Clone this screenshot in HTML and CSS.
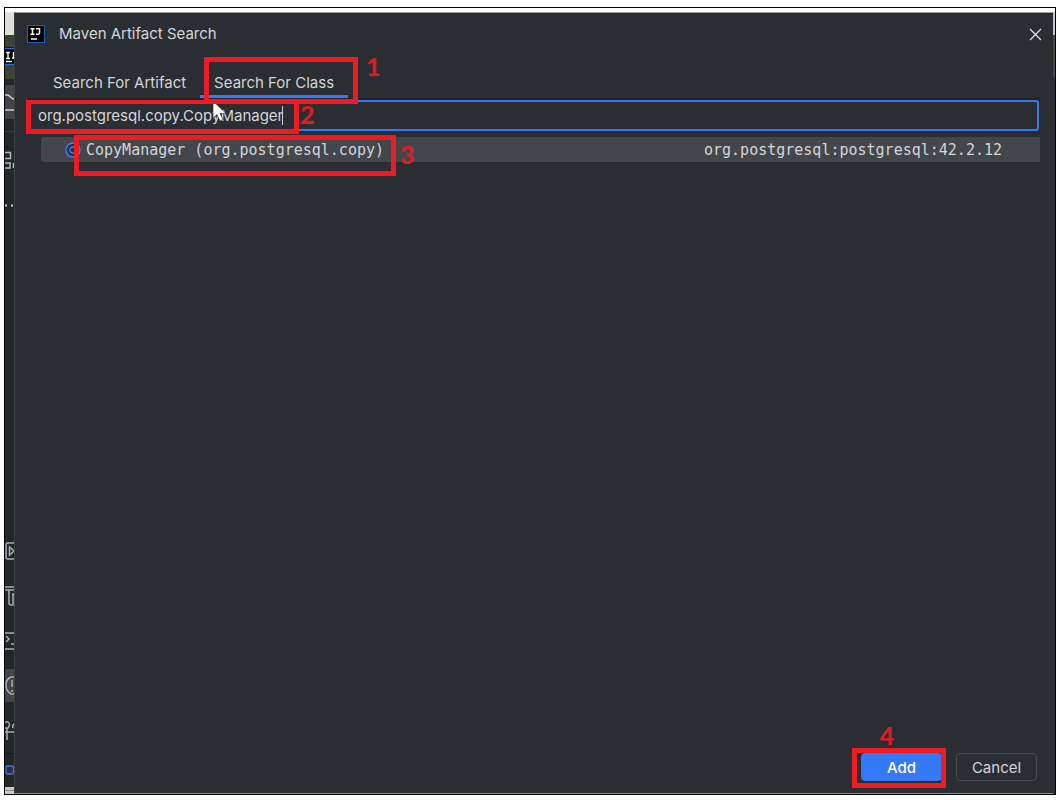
FILE: index.html
```html
<!DOCTYPE html>
<html lang="en">
<head>
<meta charset="utf-8">
<title>Maven Artifact Search</title>
<link rel="stylesheet" href="styles.css">
</head>
<body>
<div class="frame">
  <aside class="strip">
    <svg class="strip-top" width="9" height="204" viewBox="0 0 9 204" aria-hidden="true">
      <rect width="9" height="23" fill="#dfe0dc"/>
      <rect y="23" width="9" height="48" fill="#3a4435"/>
      <rect y="35" width="9" height="18" fill="#000"/>
      <path d="M0 36.500H9M0 52.500H9" stroke="#1f6fe0" stroke-width="1.500"/>
      <path d="M1 40.500H5M3 40.500V46.500M1 46.500H5M1 49.500H7M8.500 40V46H7" stroke="#fff" stroke-width="1.400" fill="none"/>
      <rect y="67" width="9" height="6" fill="#24272a"/>
      <rect y="73" width="9" height="34" fill="#43454a"/>
      <path d="M0 83H3L8 87H9M0 98H9" stroke="#ced0d6" stroke-width="1.500" fill="none"/>
      <path d="M0 119.500H9" stroke="#3b3e42"/>
      <path d="M0 140.500H5.500V146.500H0M0 151H5V156H0M8.500 156V151" stroke="#b4b8bf" stroke-width="1.500" fill="none"/>
      <path d="M0 193.500H2M6 193.500H8" stroke="#ced0d6" stroke-width="2"/>
    </svg>
    <svg class="strip-bottom" width="9" height="254" viewBox="0 540 9 254" aria-hidden="true">
      <rect y="669" width="9" height="33" fill="#43454a"/>
      <g stroke="#a9adb3" stroke-width="1.500" fill="none">
        <path d="M9 543H3Q1 543 1 545V557Q1 559 3 559H9M4.500 547V555L9 551Z"/>
        <path d="M0 587H9M0 590H4V603Q4 605 6 605H9M4 590H9M7 594H9M8 594V604"/>
        <path d="M0 633H9M0 649H9M1 636L4 639L1 642M6 644H9"/>
        <path d="M9 677H6Q1 679 1 685Q1 691 6 694H9M7 680V687M7 690V692"/>
        <path d="M0 722H3Q6 724 3 728H0M0 732H9M2 728V740M9 724Q7 725 8 728"/>
      </g>
      <path d="M0 753.500H9" stroke="#17191b"/>
      <rect x="1" y="766" width="7.500" height="8" rx="1.500" fill="#25324d" stroke="#4477d8" stroke-width="1.300"/>
      <rect y="787" width="9" height="7" fill="#c9c8c4"/>
      <path d="M0 790.500H9" stroke="#8b8a87"/>
    </svg>
  </aside>

  <main class="dialog">
    <header class="titlebar">
      <svg class="logo" width="18" height="18" viewBox="0 0 18 18" aria-hidden="true">
        <rect x=".5" y=".5" width="17" height="17" fill="#000" stroke="#1b62b8"/>
        <path d="M3.500 3.700H7.500M5.500 3.700V9.300M3.500 9.300H7.500M9 3.700H12.500V7.800Q12.500 9.300 11 9.300H9M4 14H10" stroke="#fff" stroke-width="1.500" fill="none"/>
      </svg>
      <h1 class="title">Maven Artifact Search</h1>
      <button class="close" type="button" aria-label="Close">
        <svg width="13" height="13" viewBox="0 0 13 13"><path d="M1 1L12 12M12 1L1 12" stroke="#dfe1e5" stroke-width="1.300"/></svg>
      </button>
    </header>

    <nav class="tabs">
      <button class="tab" type="button">Search For Artifact</button>
      <button class="tab tab-active" type="button">Search For Class</button>
      <span class="mark mark-tab"></span><span class="step step-tab">1</span>
    </nav>

    <div class="search">
      <input class="query" type="text" aria-label="Class name" value="org.postgresql.copy.CopyManager">
      <span class="caret"></span>
      <span class="mark mark-query"></span><span class="step step-query">2</span>
      <svg class="pointer" width="16" height="22" viewBox="0 0 16 22" aria-hidden="true"><path d="M1 0V17L5 13.500L8 20L11 18.500L8 12.500H14Z" fill="#fff" stroke="#25272b" stroke-width=".6"/></svg>
    </div>

    <div class="results">
      <div class="result">
        <svg class="class-icon" width="16" height="16" viewBox="0 0 16 16" aria-hidden="true">
          <circle cx="8" cy="8" r="7" fill="#25324d" stroke="#4a7fe8" stroke-width="1.300"/>
          <path d="M10.500 6A3.200 3.200 0 1 0 10.500 10" fill="none" stroke="#4a7fe8" stroke-width="1.300"/>
        </svg>
        <span class="class-name">CopyManager (org.postgresql.copy)</span>
        <span class="artifact">org.postgresql:postgresql:42.2.12</span>
      </div>
      <span class="mark mark-result"></span><span class="step step-result">3</span>
    </div>

    <footer class="actions">
      <button class="button primary" type="button">Add</button>
      <button class="button" type="button">Cancel</button>
      <span class="mark mark-add"></span><span class="step step-add">4</span>
    </footer>
  </main>
  <div class="edge"></div>
</div>
</body>
</html>
```
FILE: styles.css
```css
* { box-sizing: border-box; }

body {
  margin: 0;
  min-height: 100vh;
  padding: 7px 4px 5px;
  display: flex;
  background: #fff;
  color: #d3d5d9;
  font: 15px/20px Inter, sans-serif;
}

button, input { font: inherit; color: inherit; margin: 0; }

.frame {
  flex: 1;
  display: flex;
  padding-top: 4px;
  border: 1px solid #000;
  background: #fff;
}

.strip {
  width: 9px;
  display: flex;
  flex-direction: column;
  justify-content: space-between;
  overflow: hidden;
  background: #22282a;
}
.strip svg { flex: none; display: block; }

.dialog {
  flex: 1;
  display: flex;
  flex-direction: column;
  padding: 0 13px 0 12px;
  background: #2a2d31;
  border-top: 1px solid #9a9a9a;
  border-bottom: 1px solid #8e8f8e;
  border-left: 1px solid #3f433f;
}

.edge {
  width: 2px;
  background: linear-gradient(#c8c8c6 23px, #4a4844 23px, #4a4844 66px, #303336 66px);
}

.titlebar {
  display: flex;
  align-items: center;
  height: 42px;
}
.logo { margin-right: 14px; }
.title { margin: 0; font-size: 15px; font-weight: 400; }
.close {
  margin: 0 -6px 0 auto;
  padding: 4px;
  border: 0;
  background: none;
  display: flex;
}

.tabs {
  position: relative;
  z-index: 1;
  display: flex;
  height: 45px;
  padding-left: 12px;
  border-bottom: 2px solid #222427;
}
.tab {
  padding: 15px 14px 0;
  border: 0;
  border-bottom: 3px solid transparent;
  background: none;
  height: 43px;
}
.tab-active { border-bottom-color: #3578f8; }

.search { position: relative; margin-right: 1px; }
.query {
  display: block;
  width: 100%;
  height: 31px;
  padding: 0 9px;
  border: 2px solid #3578f8;
  border-radius: 3px;
  background: #2a2d31;
  outline: none;
}
.caret {
  position: absolute;
  left: 255px;
  top: 6px;
  width: 1px;
  height: 19px;
  background: #ced0d6;
}
.pointer { position: absolute; left: 185px; top: 1px; }

.results { position: relative; flex: 1; padding: 6px 0 0 14px; }
.result {
  display: flex;
  align-items: center;
  height: 25px;
  padding: 0 38px 0 24px;
  border-radius: 4px 0 0 4px;
  background: #43474b;
  font: 15px/24px "DejaVu Sans Mono", monospace;
}
.class-icon { margin-right: 5px; }
.artifact { margin-left: auto; }

.actions {
  position: relative;
  display: flex;
  justify-content: flex-end;
  gap: 14px;
  padding: 0 3px 12px 0;
}
.button {
  width: 81px;
  height: 28px;
  padding: 1px 0 0;
  border: 1px solid #464b4f;
  border-radius: 4px;
  background: #2a2d31;
}
.primary { background: #3578f8; border-color: #3578f8; color: #fff; font-weight: 500; }

.mark {
  position: absolute;
  border: 5px solid #ed1c24;
  pointer-events: none;
}
.mark-tab { left: 177px; top: 2px; width: 154px; height: 47px; }
.mark-query { left: -1px; top: -1px; width: 273px; height: 35px; }
.mark-result { left: 47px; top: 4px; width: 322px; height: 41px; }
.mark-add { right: 94px; top: -5px; width: 94px; height: 40px; }

.step {
  position: absolute;
  color: #d32027;
  font: 900 25px/28px Lato, sans-serif;
}
.step-tab { left: 339px; top: -3px; }
.step-query { left: 273px; top: 0; }
.step-result { left: 373px; top: 9px; }
.step-add { right: 146px; top: -32px; }
```
